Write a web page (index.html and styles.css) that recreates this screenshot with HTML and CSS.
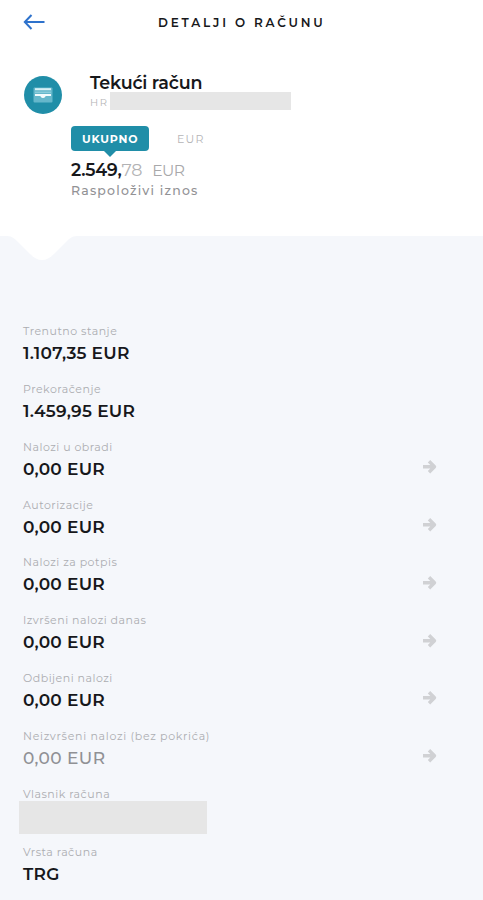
FILE: index.html
```html
<!DOCTYPE html>
<html lang="hr">
<head>
  <meta charset="UTF-8" />
  <meta name="viewport" content="width=device-width, initial-scale=1.0" />
  <title>Detalji o računu</title>
  <link rel="stylesheet" href="styles.css">
</head>
<body>
  <svg class="symbols" width="0" height="0">
    <symbol id="arrow" viewBox="0 0 16 16">
      <path d="M1.5 7.8H13M7.5 2.3L13 7.8L7.5 13.3" fill="none" stroke="#d0d1d4" stroke-width="3.4" stroke-linejoin="round" />
    </symbol>
  </svg>

  <header class="topbar">
    <a class="back" href="#" aria-label="Natrag">
      <svg width="22" height="16" viewBox="0 0 22 16" fill="none" stroke="#2e72cc" stroke-width="2">
        <path d="M21.5 8H2M8.5 1L1.8 8L8.5 15" />
      </svg>
    </a>
    <h1>DETALJI O RAČUNU</h1>
  </header>

  <section class="account">
    <div class="account-head">
      <div class="account-icon">
        <svg width="20" height="16" viewBox="0 0 20 16">
          <rect x="0.5" y="0.5" width="19" height="15" rx="1" fill="#65b7cb" />
          <path d="M2 2.2H18" stroke="#d8f0f5" stroke-width="2" />
          <path d="M2 5.3H18" stroke="#8accdb" stroke-width="1.4" />
          <path d="M2 7H18V9H13C12.2 9 12.2 11 10 11C7.8 11 7.8 9 7 9H2Z" fill="#f2fbfd" />
        </svg>
      </div>
      <div class="account-info">
        <h2>Tekući račun</h2>
        <div class="iban">
          <span>HR</span>
          <span class="iban-mask"></span>
        </div>
      </div>
    </div>

    <div class="balance">
      <div class="tabs">
        <a class="tab active" href="#">UKUPNO</a>
        <a class="tab" href="#">EUR</a>
      </div>
      <div class="amount"><span class="whole">2.549,</span><span class="cents">78</span><span class="currency">EUR</span></div>
      <div class="available">Raspoloživi iznos</div>
    </div>
  </section>

  <main class="details">
    <svg class="notch" width="76" height="26" viewBox="0 0 76 26">
      <path d="M6 0C11 0 14 3 17 6L29 18C37 26 45 26 53 18L65 6C68 3 71 0 76 0Z" fill="#ffffff" />
    </svg>

    <div class="rows">
      <div class="row">
        <div>
          <div class="label">Trenutno stanje</div>
          <div class="value">1.107,35 EUR</div>
        </div>
      </div>
      <div class="row">
        <div>
          <div class="label">Prekoračenje</div>
          <div class="value">1.459,95 EUR</div>
        </div>
      </div>
      <div class="row">
        <div>
          <div class="label">Nalozi u obradi</div>
          <div class="value">0,00 EUR</div>
        </div>
        <svg class="arrow"><use href="#arrow" /></svg>
      </div>
      <div class="row">
        <div>
          <div class="label">Autorizacije</div>
          <div class="value">0,00 EUR</div>
        </div>
        <svg class="arrow"><use href="#arrow" /></svg>
      </div>
      <div class="row">
        <div>
          <div class="label">Nalozi za potpis</div>
          <div class="value">0,00 EUR</div>
        </div>
        <svg class="arrow"><use href="#arrow" /></svg>
      </div>
      <div class="row">
        <div>
          <div class="label">Izvršeni nalozi danas</div>
          <div class="value">0,00 EUR</div>
        </div>
        <svg class="arrow"><use href="#arrow" /></svg>
      </div>
      <div class="row">
        <div>
          <div class="label">Odbijeni nalozi</div>
          <div class="value">0,00 EUR</div>
        </div>
        <svg class="arrow"><use href="#arrow" /></svg>
      </div>
      <div class="row">
        <div>
          <div class="label long">Neizvršeni nalozi (bez pokrića)</div>
          <div class="value muted">0,00 EUR</div>
        </div>
        <svg class="arrow"><use href="#arrow" /></svg>
      </div>
      <div class="row">
        <div>
          <div class="label">Vlasnik računa</div>
          <div class="owner-mask"></div>
        </div>
      </div>
      <div class="row">
        <div>
          <div class="label">Vrsta računa</div>
          <div class="value">TRG</div>
        </div>
      </div>
    </div>
  </main>
</body>
</html>
```
FILE: styles.css
```css
* {
  box-sizing: border-box;
}
body {
  margin: 0;
  height: 900px;
  overflow: hidden;
  display: flex;
  flex-direction: column;
  font-family: Montserrat, Inter, sans-serif;
  background-color: #ffffff;
  color: #17181b;
  white-space: nowrap;
}
a {
  text-decoration: none;
}
.symbols {
  position: absolute;
}
.topbar {
  display: grid;
  grid-template-columns: 158px 1fr;
  align-items: center;
  flex-shrink: 0;
  height: 44px;
}
.back {
  display: flex;
  padding-left: 23px;
}
.topbar h1 {
  margin: 0;
  padding-top: 2px;
  font-size: 12px;
  line-height: 16px;
  font-weight: 600;
  letter-spacing: 2.8px;
}
.account {
  flex-shrink: 0;
  height: 192px;
  padding: 29px 24px 0;
}
.account-head {
  display: flex;
  gap: 28px;
}
.account-icon {
  display: flex;
  align-items: center;
  justify-content: center;
  width: 38px;
  height: 38px;
  margin-top: 3px;
  border-radius: 50%;
  background-color: #208ea8;
}
.account-info h2 {
  margin: 0;
  padding-top: 1px;
  font-size: 17.5px;
  line-height: 18px;
  font-weight: 600;
  letter-spacing: -0.2px;
}
.iban {
  display: flex;
  align-items: center;
  height: 18px;
  font-size: 10px;
  letter-spacing: 1.5px;
  color: #b5b5b7;
}
.iban span:first-child {
  width: 20px;
  padding-top: 3px;
}
.iban-mask {
  width: 181px;
  height: 18px;
  background-color: #e6e6e6;
}
.balance {
  padding: 12px 0 0 47px;
}
.tabs {
  display: flex;
  gap: 28px;
}
.tab {
  height: 25px;
  font-size: 11px;
  line-height: 26px;
  letter-spacing: 1.2px;
  color: #b5b5b7;
}
.tab.active {
  position: relative;
  width: 78px;
  padding-left: 11px;
  border-radius: 4px;
  background-color: #208ea8;
  color: #ffffff;
  font-weight: 700;
  letter-spacing: 0.8px;
}
.tab.active::after {
  content: "";
  position: absolute;
  left: 33px;
  top: 25px;
  border: 6px solid transparent;
  border-top-color: #208ea8;
  border-bottom: 0;
}
.amount {
  margin-top: 8px;
  font-size: 17.5px;
  line-height: 22px;
  letter-spacing: -0.2px;
}
.whole {
  font-weight: 600;
}
.cents {
  color: #b2b2b4;
}
.currency {
  margin-left: 10px;
  font-size: 15.5px;
  letter-spacing: -0.6px;
  color: #a8a8aa;
}
.available {
  font-size: 12.5px;
  line-height: 18px;
  font-weight: 500;
  letter-spacing: 1.2px;
  color: #929295;
}
.details {
  flex: 1;
  background-color: #f5f7fb;
}
.notch {
  display: block;
  margin-left: 1px;
}
.rows {
  padding: 60px 45px 0 23px;
}
.row {
  display: flex;
  align-items: flex-start;
  justify-content: space-between;
  height: 57.85px;
}
.label {
  font-size: 11px;
  line-height: 18px;
  letter-spacing: 0.5px;
  color: #acadb1;
}
.label.long {
  letter-spacing: 0.7px;
}
.value {
  font-size: 17px;
  line-height: 27px;
  font-weight: 600;
  letter-spacing: 0.25px;
}
.value.muted {
  font-weight: 500;
  letter-spacing: 0.4px;
  color: #909195;
}
.arrow {
  width: 17px;
  height: 16px;
  margin-top: 21.4px;
}
.owner-mask {
  width: 188px;
  height: 33px;
  margin: -2px 0 0 -4px;
  background-color: #e6e6e6;
}
```
